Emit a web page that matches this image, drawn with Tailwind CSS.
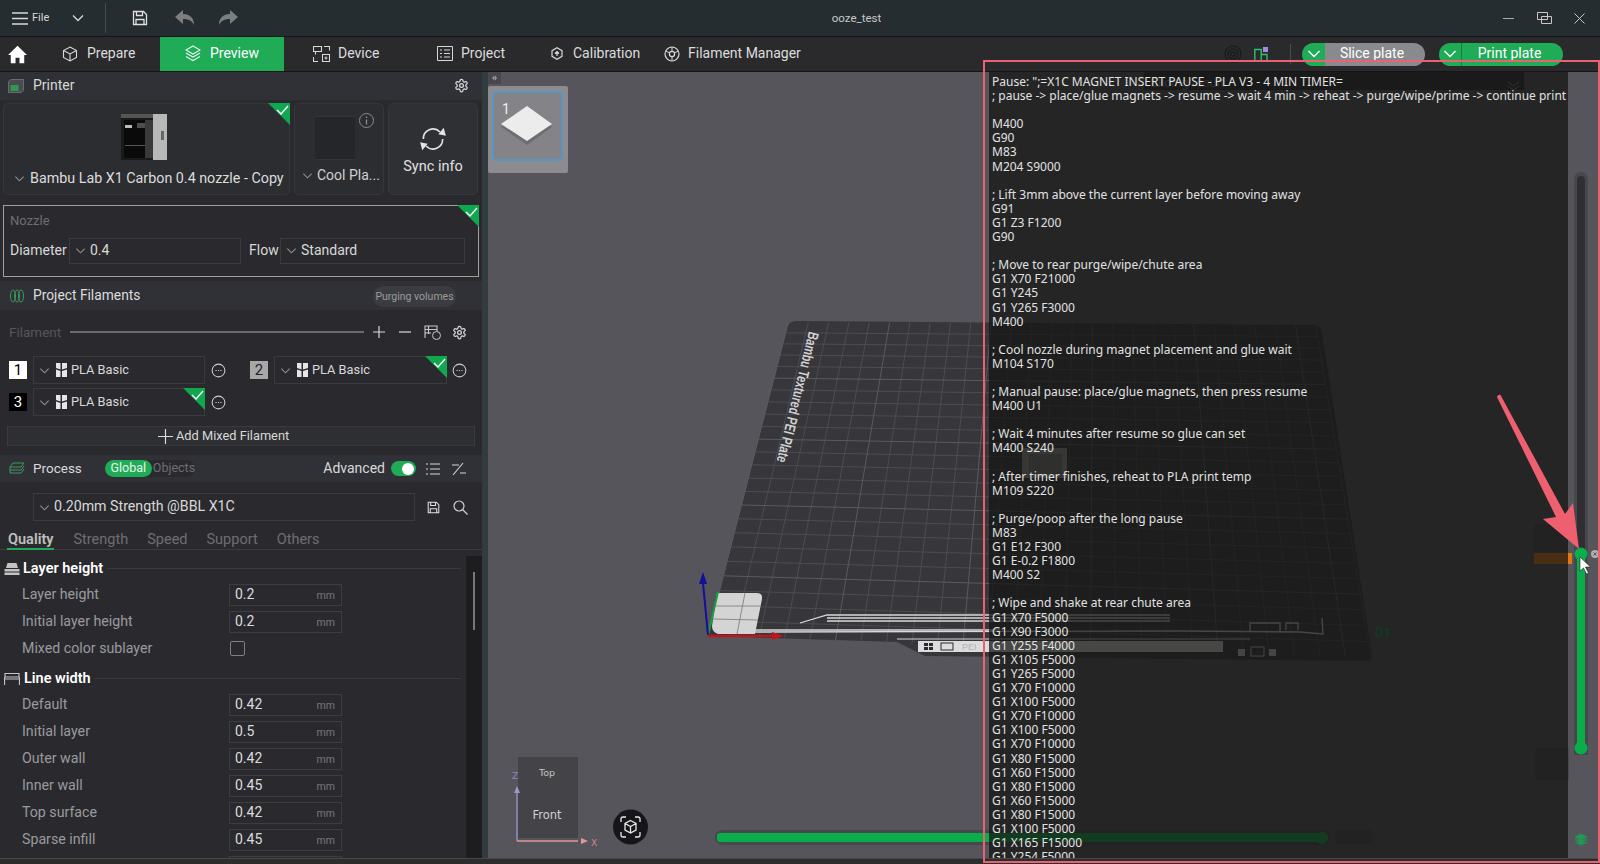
<!DOCTYPE html>
<html lang="en">
<head>
<meta charset="utf-8">
<title>ooze_test</title>
<script src="https://cdn.jsdelivr.net/npm/@tailwindcss/browser@4"></script>
</head>
<body class="w-[1600px] h-[864px] overflow-hidden bg-[#2a2a2e] font-['Roboto',sans-serif] text-[14px] text-[#d8d8d8]">
<svg class="hidden">
  <symbol id="chev" viewBox="0 0 12 12"><path d="M1.5 4L6 8.5 10.5 4" fill="none" stroke="#8f8f8f" stroke-width="1.2"/></symbol>
  <symbol id="corner" viewBox="0 0 22 22"><path d="M0 0H22V22Z" fill="#10a84f"/><path d="M9 7l4 4 7-8" fill="none" stroke="#fff" stroke-width="1.4"/></symbol>
  <symbol id="gear" viewBox="0 0 24 24"><g fill="none" stroke="#d8d8d8" stroke-width="2"><path d="M12.22 2h-.44a2 2 0 0 0-2 2v.18a2 2 0 0 1-1 1.73l-.43.25a2 2 0 0 1-2 0l-.15-.08a2 2 0 0 0-2.73.73l-.22.38a2 2 0 0 0 .73 2.73l.15.1a2 2 0 0 1 1 1.72v.51a2 2 0 0 1-1 1.74l-.15.09a2 2 0 0 0-.73 2.73l.22.38a2 2 0 0 0 2.73.73l.15-.08a2 2 0 0 1 2 0l.43.25a2 2 0 0 1 1 1.73V20a2 2 0 0 0 2 2h.44a2 2 0 0 0 2-2v-.18a2 2 0 0 1 1-1.73l.43-.25a2 2 0 0 1 2 0l.15.08a2 2 0 0 0 2.73-.73l.22-.39a2 2 0 0 0-.73-2.73l-.15-.08a2 2 0 0 1-1-1.74v-.5a2 2 0 0 1 1-1.74l.15-.09a2 2 0 0 0 .73-2.73l-.22-.38a2 2 0 0 0-2.73-.73l-.15.08a2 2 0 0 1-2 0l-.43-.25a2 2 0 0 1-1-1.73V4a2 2 0 0 0-2-2z"/><circle cx="12" cy="12" r="3"/></g></symbol>
  <symbol id="more" viewBox="0 0 16 16"><circle cx="8" cy="8" r="6.8" fill="none" stroke="#cfcfcf" stroke-width="1.100"/><path d="M4.800 8h1.200M7.400 8h1.200M10 8h1.200" stroke="#cfcfcf" stroke-width="1.300"/></symbol>
  <symbol id="bambu" viewBox="0 0 11 14"><path d="M0 0h4.500v6.500L0 5zM6 0h5v5L6 6.500zM0 6.500l4.500 1.500V14H0zM6 8l5-1.500V14H6z" fill="#e6e6e6"/></symbol>
  <symbol id="save" viewBox="0 0 16 16"><path d="M1.500 1.500h10l3 3v10h-13zM4.500 1.500v4h6v-4M4 14.500v-5h8v5" fill="none" stroke="#e0e0e0" stroke-width="1.300"/></symbol>
</svg>

<div class="flex flex-col w-full h-full">
  <!-- title bar -->
  <header class="h-[37px] shrink-0 flex items-center bg-[#262d30] border-b border-[#141516] text-[#d8d8d8]">
    <svg class="ml-[12px] w-[16px] h-[13px]" viewBox="0 0 16 13"><path d="M0 1h16M0 6.500h16M0 12h16" stroke="#d8d8d8" stroke-width="1.300"/></svg>
    <span class="ml-[4px] w-[16px] text-[11px]">File</span>
    <svg class="ml-[24px] w-[12px] h-[12px]" viewBox="0 0 12 12"><path d="M1 3.500L6 8.500 11 3.500" fill="none" stroke="#d8d8d8" stroke-width="1.300"/></svg>
    <div class="ml-[21px] w-px h-[30px] bg-[#454c4e]"></div>
    <svg class="ml-[26px] w-[16px] h-[16px]" viewBox="0 0 16 16"><use href="#save"/></svg>
    <svg class="ml-[27px] w-[20px] h-[16px]" viewBox="0 0 20 16"><path d="M0 7L8 0v4c7 0 11 4 11 11-2-4-5-6-11-6v5z" fill="#7b7f80"/></svg>
    <svg class="ml-[23px] w-[20px] h-[16px]" viewBox="0 0 20 16"><path d="M20 7L12 0v4C5 4 1 8 1 15c2-4 5-6 11-6v5z" fill="#7b7f80"/></svg>
    <div class="flex-1 text-center text-[11.500px] text-[#c8c8c8] pr-[28px] pt-[1px]">ooze_test</div>
    <div class="flex items-center gap-[18px] pr-[15px]">
      <svg class="w-[11px] h-[11px]" viewBox="0 0 11 11"><path d="M0 5.500h11" stroke="#a8a8a8"/></svg>
      <svg class="w-[15px] h-[12px] ml-[5px]" viewBox="0 0 15 12"><path d="M.5.500h10v7H.5zM4.500 4.500h10v7h-10z" fill="none" stroke="#c8c8c8"/></svg>
      <svg class="w-[11px] h-[11px] ml-[4px]" viewBox="0 0 11 11"><path d="M.5.500l10 10M10.500.500l-10 10" stroke="#c8c8c8"/></svg>
    </div>
  </header>

  <!-- tab bar -->
  <nav class="h-[35px] shrink-0 flex items-center bg-[#2a2a2d] border-b border-[#141516] text-[14px] text-[#dcdcdc]">
    <div class="w-[40px] pl-[8px]">
      <svg class="w-[19px] h-[19px]" viewBox="0 0 24 24"><path d="M12 1L0 12.500h3.500V23h6v-7h5v7h6V12.500H24z" fill="#fff"/></svg>
    </div>
    <div class="w-[120px] pl-[22px] pb-[1px] flex items-center gap-[9px]">
      <svg class="w-[16px] h-[16px]" viewBox="0 0 16 16"><path d="M8 1l6.500 3.500v7L8 15l-6.500-3.500v-7zM1.500 4.500L8 8l6.500-3.500M8 8v7" fill="none" stroke="#d8d8d8" stroke-width="1.100"/></svg>Prepare
    </div>
    <div class="w-[124px] h-full pb-[1px] bg-[#20ab57] flex items-center justify-center gap-[9px] text-white">
      <svg class="w-[16px] h-[17px]" viewBox="0 0 16 17"><path d="M8 1l7 4-7 4-7-4zM1 8l7 4 7-4M1 11.500l7 4 7-4" fill="none" stroke="#e8f5ec" stroke-width="1.100"/></svg>Preview
    </div>
    <div class="w-[136px] pl-[29px] pb-[1px] flex items-center gap-[8px]">
      <svg class="w-[17px] h-[16px]" viewBox="0 0 17 16"><path d="M.5.500h8v5h-8zM2.500 5.500v3M11 .5h5.500v4M.5 11v4.500H5M9.500 8.500h7v7h-7zM13 10.500v3M11.500 12h3" fill="none" stroke="#d8d8d8" stroke-width="1.100"/></svg>Device
    </div>
    <div class="w-[114px] pl-[17px] pb-[1px] flex items-center gap-[8px]">
      <svg class="w-[16px] h-[15px]" viewBox="0 0 16 15"><path d="M.5.500h15v14H.5zM3 4h2M7 4h6M3 7.500h2M7 7.500h6M3 11h2M7 11h6" fill="none" stroke="#d8d8d8" stroke-width="1"/></svg>Project
    </div>
    <div class="w-[113px] pl-[17px] pb-[1px] flex items-center gap-[10px]">
      <svg class="w-[12px] h-[13px]" viewBox="0 0 12 13"><path d="M6 .8l5 2.900v5.600l-5 2.900-5-2.900V3.700zM6 9V4.500M4 6.500l2-2 2 2" fill="none" stroke="#d8d8d8" stroke-width="1.200"/></svg>Calibration
    </div>
    <div class="pl-[17px] pb-[1px] flex items-center gap-[8px]">
      <svg class="w-[16px] h-[16px]" viewBox="0 0 16 16"><circle cx="8" cy="8" r="7" fill="none" stroke="#d8d8d8" stroke-width="1.200"/><circle cx="8" cy="8" r="2.600" fill="none" stroke="#d8d8d8" stroke-width="1.200"/><path d="M8 1v4.400M1.800 5l4 2M14.200 5l-4 2M8 10.600V15" stroke="#d8d8d8" stroke-width="1"/></svg>Filament Manager
    </div>
    <div class="ml-auto pr-[37px] flex items-center h-full">
      <svg class="w-[18px] h-[18px] mr-[12px]" viewBox="0 0 18 18"><circle cx="9" cy="9" r="8" fill="none" stroke="#17191a" stroke-width="1.200"/><circle cx="9" cy="9" r="5" fill="none" stroke="#17191a" stroke-width="1.200"/><circle cx="9" cy="9" r="2.200" fill="none" stroke="#17191a" stroke-width="1.200"/></svg>
      <svg class="w-[14px] h-[15px]" viewBox="0 0 14 15"><path d="M.8 2.500h6.400v12H.8zM7.200 7.500h5.800v7H7.200z" fill="none" stroke="#2dc26b" stroke-width="1.400"/><path d="M9 0h5v5H9z" fill="#a58ae0"/></svg>
      <div class="ml-[22px] w-px h-[20px] bg-[#4b4b4e]"></div>
      <div class="ml-[11px] w-[123px] h-[23px] flex rounded-full overflow-hidden text-white">
        <div class="w-[23px] bg-[#20ab57] flex items-center justify-center"><svg class="w-[14px] h-[8px]" viewBox="0 0 13 8"><path d="M1 1l5.500 5.500L12 1" fill="none" stroke="#fff" stroke-width="1.400"/></svg></div>
        <div class="flex-1 bg-[#8a8a8e] flex items-center justify-center pr-[6px] pb-[1px]">Slice plate</div>
      </div>
      <div class="ml-[14px] w-[124px] h-[23px] flex rounded-full overflow-hidden text-white">
        <div class="w-[23px] bg-[#20ab57] flex items-center justify-center border-r border-[#1a7a40]"><svg class="w-[14px] h-[8px]" viewBox="0 0 13 8"><path d="M1 1l5.500 5.500L12 1" fill="none" stroke="#fff" stroke-width="1.400"/></svg></div>
        <div class="flex-1 bg-[#20ab57] flex items-center justify-center pr-[6px] pb-[1px]">Print plate</div>
      </div>
    </div>
  </nav>

  <div class="flex-1 min-h-0 flex">
    <!-- sidebar -->
    <aside class="w-[482px] shrink-0 flex flex-col bg-[#2a2a2e] overflow-hidden">
      <div class="h-[28px] shrink-0 bg-[#303136] flex items-center pl-[8px] pr-[13px] pb-[1px]">
        <svg class="w-[16px] h-[14px]" viewBox="0 0 16 14"><path d="M.5 2.500L3 .5h12.500v11l-2.500 2H.5z" fill="#4a4b50" stroke="#777" stroke-width=".8"/><path d="M2.500 6h8v6h-8z" fill="#2a9a55"/></svg>
        <span class="ml-[9px]">Printer</span>
        <svg class="ml-auto w-[15px] h-[15px]" viewBox="0 0 24 24"><use href="#gear"/></svg>
      </div>

      <div class="mt-[3px] h-[92px] shrink-0 flex gap-[4px] px-[3px]">
        <div class="relative w-[287px] bg-[#2c2d31] border border-[#36373b] rounded-[5px] flex flex-col items-center">
          <svg class="absolute -top-px -right-px w-[22px] h-[22px]" viewBox="0 0 22 22"><use href="#corner"/></svg>
          <svg class="mt-[10px] -ml-[5px] w-[46px] h-[46px]" viewBox="0 0 46 46"><rect width="46" height="46" fill="#1a1a1a"/><rect x="0" y="0" width="34" height="4" fill="#555"/><rect x="32" width="14" height="46" fill="#b8b8b8"/><rect x="3" y="6" width="27" height="38" fill="#0a0a0a"/><rect x="4" y="11" width="7" height="3" fill="#bbb"/><rect x="16" y="9" width="12" height="5" fill="#4d4d4d"/><rect x="4" y="31" width="24" height="1" fill="#555"/><rect x="24" y="6" width="8" height="38" fill="#3a3a3a"/><rect x="40" y="17" width="3" height="9" fill="#666"/></svg>
          <div class="mt-[8px] w-full flex items-center pl-[10px] text-[14.300px] text-[#dcdcdc] whitespace-nowrap">
            <svg class="w-[11px] h-[11px] mr-[5px]" viewBox="0 0 12 12"><use href="#chev"/></svg>Bambu Lab X1 Carbon 0.4 nozzle - Copy
          </div>
        </div>
        <div class="relative w-[90px] bg-[#2c2d31] border border-[#36373b] rounded-[5px] flex flex-col">
          <svg class="absolute top-[9px] right-[9px] w-[15px] h-[15px]" viewBox="0 0 15 15"><circle cx="7.500" cy="7.500" r="7" fill="none" stroke="#8c8c8c"/><path d="M7.500 6.500v5M7.500 3.500v1.500" stroke="#8c8c8c" stroke-width="1.300"/></svg>
          <div class="mt-[12px] ml-[20px] w-[40px] h-[44px] bg-[#25262a] border-t border-b border-[#33343a]"></div>
          <div class="mt-[5px] flex items-center pl-[7px] text-[#d0d0d0] whitespace-nowrap">
            <svg class="w-[11px] h-[11px] mr-[4px]" viewBox="0 0 12 12"><use href="#chev"/></svg>Cool Pla...
          </div>
        </div>
        <div class="w-[90px] bg-[#2f3034] border border-[#36373b] rounded-[5px] flex flex-col items-center">
          <svg class="mt-[22px] w-[30px] h-[26px]" viewBox="0 0 28 24"><path d="M5 12a9 9 0 0 1 15.500-6.500M23 12a9 9 0 0 1-15.500 6.500" fill="none" stroke="#e4e4e4" stroke-width="1.500"/><path d="M24 1.500l2 7.500-7-1.500zM4 22.500l-2-7.500 7 1.500z" fill="#e4e4e4"/></svg>
          <span class="mt-[4px] text-[#e0e0e0] text-[14.500px]">Sync info</span>
        </div>
      </div>

      <div class="relative mt-[10px] mx-[3px] h-[72px] shrink-0 border border-[#a0a0a0] px-[6px]">
        <svg class="absolute -top-px -right-px w-[22px] h-[22px]" viewBox="0 0 22 22"><use href="#corner"/></svg>
        <div class="mt-[5px] text-[13px] text-[#6e6e72]">Nozzle</div>
        <div class="mt-[7px] flex items-center">
          <span class="w-[59px]">Diameter</span>
          <div class="w-[172px] h-[26px] border border-[#3a3b3f] flex items-center pl-[5px]"><svg class="w-[11px] h-[11px] mr-[4px]" viewBox="0 0 12 12"><use href="#chev"/></svg>0.4</div>
          <span class="ml-[8px] w-[31px]">Flow</span>
          <div class="w-[185px] h-[26px] border border-[#3a3b3f] flex items-center pl-[5px]"><svg class="w-[11px] h-[11px] mr-[4px]" viewBox="0 0 12 12"><use href="#chev"/></svg>Standard</div>
        </div>
      </div>

      <div class="mt-[4px] h-[29px] shrink-0 bg-[#303136] flex items-center pl-[10px]">
        <svg class="w-[14px] h-[14px]" viewBox="0 0 14 14"><g fill="none" stroke="#3f9a63" stroke-width="1"><ellipse cx="3" cy="7" rx="2.500" ry="6"/><ellipse cx="7" cy="7" rx="2.500" ry="6"/><ellipse cx="11" cy="7" rx="2.500" ry="6"/></g></svg>
        <span class="ml-[9px] text-[#dcdcdc] text-[13.800px]">Project Filaments</span>
        <span class="ml-auto mr-[26px] mt-[2px] w-[83px] h-[21px] rounded-full bg-[#3b3c41] text-[10.500px] text-[#9a9a9a] flex items-center justify-center">Purging volumes</span>
      </div>

      <div class="h-[44px] shrink-0 flex items-center pl-[9px]">
        <span class="w-[61px] text-[13.500px] text-[#55565a]">Filament</span>
        <div class="w-[294px] h-[2px] bg-[#6a6a6e]"></div>
        <svg class="ml-[9px] w-[12px] h-[12px]" viewBox="0 0 12 12"><path d="M6 0v12M0 6h12" stroke="#d8d8d8" stroke-width="1.200"/></svg>
        <svg class="ml-[14px] w-[12px] h-[12px]" viewBox="0 0 12 12"><path d="M0 6h12" stroke="#d8d8d8" stroke-width="1.200"/></svg>
        <svg class="ml-[13px] w-[17px] h-[15px]" viewBox="0 0 17 15"><path d="M1 13V1h12v6M1 4.500h12M4.500 1v8M1 8h6" fill="none" stroke="#c8c8c8" stroke-width="1.100"/><circle cx="12.500" cy="10.500" r="4" fill="#2a2a2e" stroke="#c8c8c8"/></svg>
        <svg class="ml-[11px] w-[15px] h-[15px]" viewBox="0 0 24 24"><use href="#gear"/></svg>
      </div>

      <div class="mt-[2px] h-[28px] shrink-0 flex items-center text-[12.800px]">
        <div class="ml-[9px] w-[18px] h-[18px] bg-white text-black text-[15px] flex items-center justify-center">1</div>
        <div class="ml-[6px] w-[172px] h-full border border-[#3a3b3f] flex items-center pl-[5px]"><svg class="w-[11px] h-[11px] mr-[6px]" viewBox="0 0 12 12"><use href="#chev"/></svg><svg class="w-[11px] h-[14px] mr-[4px]" viewBox="0 0 11 14"><use href="#bambu"/></svg>PLA Basic</div>
        <svg class="ml-[6px] w-[15px] h-[15px]" viewBox="0 0 16 16"><use href="#more"/></svg>
        <div class="ml-[24px] w-[18px] h-[18px] bg-[#a8a8a8] text-[#222] text-[15px] flex items-center justify-center">2</div>
        <div class="relative ml-[6px] w-[173px] h-full border border-[#3a3b3f] flex items-center pl-[5px]"><svg class="absolute -top-px -right-px w-[22px] h-[22px]" viewBox="0 0 22 22"><use href="#corner"/></svg><svg class="w-[11px] h-[11px] mr-[6px]" viewBox="0 0 12 12"><use href="#chev"/></svg><svg class="w-[11px] h-[14px] mr-[4px]" viewBox="0 0 11 14"><use href="#bambu"/></svg>PLA Basic</div>
        <svg class="ml-[5px] w-[15px] h-[15px]" viewBox="0 0 16 16"><use href="#more"/></svg>
      </div>
      <div class="mt-[4px] h-[28px] shrink-0 flex items-center text-[12.800px]">
        <div class="ml-[9px] w-[18px] h-[18px] bg-black text-white text-[15px] flex items-center justify-center">3</div>
        <div class="relative ml-[6px] w-[172px] h-full border border-[#3a3b3f] flex items-center pl-[5px]"><svg class="absolute -top-px -right-px w-[22px] h-[22px]" viewBox="0 0 22 22"><use href="#corner"/></svg><svg class="w-[11px] h-[11px] mr-[6px]" viewBox="0 0 12 12"><use href="#chev"/></svg><svg class="w-[11px] h-[14px] mr-[4px]" viewBox="0 0 11 14"><use href="#bambu"/></svg>PLA Basic</div>
        <svg class="ml-[6px] w-[15px] h-[15px]" viewBox="0 0 16 16"><use href="#more"/></svg>
      </div>

      <div class="mt-[10px] mx-[7px] h-[20px] shrink-0 border border-[#3a3b3f] bg-[#2e2f33] flex items-center pl-[150px] text-[12.800px] gap-[3px]">
        <svg class="w-[15px] h-[15px]" viewBox="0 0 15 15"><path d="M7.500 0v15M0 7.500h15" stroke="#dcdcdc" stroke-width="1.200"/></svg>Add Mixed Filament
      </div>

      <div class="mt-[9px] h-[27px] shrink-0 bg-[#303136] flex items-center pl-[9px]">
        <svg class="w-[16px] h-[14px]" viewBox="0 0 16 14"><path d="M4 1h11l-3 4H1zM1 5v3h11l3-4M1 8v3h11l3-4" fill="none" stroke="#3f9a63" stroke-width="1"/></svg>
        <span class="ml-[8px] text-[13.500px]">Process</span>
        <div class="ml-[23px] h-[17px] flex items-center rounded-full bg-[#2a2a2e] text-[12.500px]">
          <span class="w-[47px] h-full rounded-full bg-[#20ab57] text-[#e8f5ec] flex items-center justify-center">Global</span>
          <span class="w-[43px] text-[#6e6e72] pl-[1px]">Objects</span>
        </div>
        <span class="ml-auto">Advanced</span>
        <div class="ml-[6px] w-[25px] h-[15px] rounded-full bg-[#20ab57] flex items-center justify-end pr-[2px]"><div class="w-[12px] h-[12px] rounded-full bg-white"></div></div>
        <svg class="ml-[10px] w-[14px] h-[12px]" viewBox="0 0 14 12"><path d="M0 1h2M4 1h10M0 6h2M4 6h10M0 11h2M4 11h10" stroke="#d8d8d8" stroke-width="1.100"/></svg>
        <svg class="ml-[12px] mr-[16px] w-[14px] h-[14px]" viewBox="0 0 14 14"><path d="M1 13L11 1M0 3h7M8 11h6" stroke="#d8d8d8" stroke-width="1.100"/></svg>
      </div>

      <div class="mt-[11px] h-[28px] shrink-0 flex items-center">
        <div class="ml-[33px] w-[382px] h-full border border-[#3a3b3f] flex items-center pl-[5px] text-[14.200px]"><svg class="w-[11px] h-[11px] mr-[4px]" viewBox="0 0 12 12"><use href="#chev"/></svg>0.20mm Strength @BBL X1C</div>
        <svg class="ml-[12px] w-[13px] h-[13px]" viewBox="0 0 16 16"><use href="#save"/></svg>
        <svg class="ml-[13px] w-[15px] h-[15px]" viewBox="0 0 15 15"><circle cx="6" cy="6" r="5" fill="none" stroke="#d0d0d0" stroke-width="1.200"/><path d="M9.500 9.500L14.500 14.500" stroke="#d0d0d0" stroke-width="1.200"/></svg>
      </div>

      <div class="h-[29px] shrink-0 flex items-end border-b border-[#3a3b3f] text-[14.500px] text-[#6e6e72] pl-[7px] gap-[19px]">
        <span class="h-[19px] border-b-2 border-[#20ab57] font-semibold text-[#c0c0c0] px-px leading-[17px] -mb-px">Quality</span>
        <span class="h-[20px]">Strength</span>
        <span class="h-[20px]">Speed</span>
        <span class="h-[20px]">Support</span>
        <span class="h-[20px]">Others</span>
      </div>

      <div class="flex-1 min-h-0 flex">
        <div class="flex-1 min-w-0 overflow-hidden">
          <div class="mt-[6px] h-[25px] flex items-center pl-[4px] pr-[5px]">
            <svg class="w-[16px] h-[14px]" viewBox="0 0 16 14"><path d="M2 6l1.500-5h9L14 6zM.5 7h15v2.500H.5zM.5 10.500h15V13H.5z" fill="#c4c4c4"/></svg>
            <span class="ml-[3px] font-semibold text-[14.500px] text-white">Layer height</span>
            <div class="ml-[4px] flex-1 h-px bg-[#3a3b3f]"></div>
          </div>
          <div class="h-[27px] flex items-center text-[14.200px] text-[#9a9a9e]"><span class="pl-[22px] w-[229px]">Layer height</span><div class="w-[113px] h-[22px] border border-[#3c3d41] flex items-center pl-[5px] pr-[6px] text-[14px] text-[#dcdcdc]">0.2<span class="ml-auto mt-[3px] text-[10.500px] text-[#77777b]">mm</span></div></div>
          <div class="h-[27px] flex items-center text-[14.200px] text-[#9a9a9e]"><span class="pl-[22px] w-[229px]">Initial layer height</span><div class="w-[113px] h-[22px] border border-[#3c3d41] flex items-center pl-[5px] pr-[6px] text-[14px] text-[#dcdcdc]">0.2<span class="ml-auto mt-[3px] text-[10.500px] text-[#77777b]">mm</span></div></div>
          <div class="h-[27px] flex items-center text-[14.200px] text-[#9a9a9e]"><span class="pl-[22px] w-[230px]">Mixed color sublayer</span><div class="w-[15px] h-[15px] border border-[#808084] rounded-[2px]"></div></div>
          <div class="mt-[4px] h-[25px] flex items-center pl-[4px] pr-[5px]">
            <svg class="w-[16px] h-[12px]" viewBox="0 0 16 12"><path d="M1 .5h14v3.500H1zM1 6h14M.5 4v8M15.500 4v8" fill="none" stroke="#c4c4c4" stroke-width="1.200"/></svg>
            <span class="ml-[4px] font-semibold text-[14.500px] text-white">Line width</span>
            <div class="ml-[4px] flex-1 h-px bg-[#3a3b3f]"></div>
          </div>
          <div class="h-[27px] flex items-center text-[14.200px] text-[#9a9a9e]"><span class="pl-[22px] w-[229px]">Default</span><div class="w-[113px] h-[22px] border border-[#3c3d41] flex items-center pl-[5px] pr-[6px] text-[14px] text-[#dcdcdc]">0.42<span class="ml-auto mt-[3px] text-[10.500px] text-[#77777b]">mm</span></div></div>
          <div class="h-[27px] flex items-center text-[14.200px] text-[#9a9a9e]"><span class="pl-[22px] w-[229px]">Initial layer</span><div class="w-[113px] h-[22px] border border-[#3c3d41] flex items-center pl-[5px] pr-[6px] text-[14px] text-[#dcdcdc]">0.5<span class="ml-auto mt-[3px] text-[10.500px] text-[#77777b]">mm</span></div></div>
          <div class="h-[27px] flex items-center text-[14.200px] text-[#9a9a9e]"><span class="pl-[22px] w-[229px]">Outer wall</span><div class="w-[113px] h-[22px] border border-[#3c3d41] flex items-center pl-[5px] pr-[6px] text-[14px] text-[#dcdcdc]">0.42<span class="ml-auto mt-[3px] text-[10.500px] text-[#77777b]">mm</span></div></div>
          <div class="h-[27px] flex items-center text-[14.200px] text-[#9a9a9e]"><span class="pl-[22px] w-[229px]">Inner wall</span><div class="w-[113px] h-[22px] border border-[#3c3d41] flex items-center pl-[5px] pr-[6px] text-[14px] text-[#dcdcdc]">0.45<span class="ml-auto mt-[3px] text-[10.500px] text-[#77777b]">mm</span></div></div>
          <div class="h-[27px] flex items-center text-[14.200px] text-[#9a9a9e]"><span class="pl-[22px] w-[229px]">Top surface</span><div class="w-[113px] h-[22px] border border-[#3c3d41] flex items-center pl-[5px] pr-[6px] text-[14px] text-[#dcdcdc]">0.42<span class="ml-auto mt-[3px] text-[10.500px] text-[#77777b]">mm</span></div></div>
          <div class="h-[27px] flex items-center text-[14.200px] text-[#9a9a9e]"><span class="pl-[22px] w-[229px]">Sparse infill</span><div class="w-[113px] h-[22px] border border-[#3c3d41] flex items-center pl-[5px] pr-[6px] text-[14px] text-[#dcdcdc]">0.45<span class="ml-auto mt-[3px] text-[10.500px] text-[#77777b]">mm</span></div></div>
          <div class="h-[27px] flex items-center"><span class="w-[229px]"></span><div class="w-[113px] h-[22px] border border-[#3c3d41]"></div></div>
        </div>
        <div class="w-[16px] shrink-0 mt-[6px] bg-[#1d1d1f] pt-[16px] flex justify-center"><div class="w-[2px] h-[58px] bg-[#77777b]"></div></div>
      </div>
    </aside>

    <div class="w-[6px] shrink-0 bg-[#323c3e]"></div>

    <!-- 3D canvas -->
    <main class="relative flex-1 min-w-0 bg-[#55555b] overflow-hidden">
      <svg class="absolute inset-0 w-full h-full" viewBox="488 72 1112 786">
        <rect x="488" y="72" width="13" height="12" fill="#47474d"/>
        <path d="M492 78l2.500-2.500v5zM497 78l-2-2.500v5z" fill="#9a9aa0"/>
        <!-- plate thumbnail -->
        <rect x="488" y="86" width="80" height="87" rx="2" fill="#8b8b90"/>
        <rect x="493" y="92" width="69" height="68" rx="3" fill="#848488" stroke="#4a9bd8" stroke-width="1.500"/>
        <text x="502" y="114" font-size="14" fill="#eee" font-family="Roboto">1</text>
        <path d="M501 125L527 108 552 125 527 143Z" fill="#6e6e72" transform="translate(0,2)"/>
        <path d="M501 124L527 106 552 124 527 141Z" fill="#ececec"/>
        <!-- bed -->
        <path d="M788 326Q790 321 797 321L1315 325Q1320 326 1322 332L1372 655Q1372 661 1365 661L925 656 897 642 708 636Z" fill="#36363b"/>
        <path id="grid" d="" fill="none" stroke="#4c4c52" stroke-width="1"/>
        <path id="grid2" d="" fill="none" stroke="#5a5a60" stroke-width="1"/>
        <text transform="translate(809,331) rotate(104)" font-size="15" font-weight="700" fill="#cfcfcf" font-family="Liberation Sans" textLength="134" lengthAdjust="spacingAndGlyphs">Bambu Textured PEI Plate</text>
        <!-- strip printed on the bed -->
        <g fill="none" stroke="#d8d8d8" stroke-width="1.300">
          <path d="M800 623L827 615H1170M827 618H1170M827 621H1170M755 630H1000"/>
          <path d="M755 632L1180 631 1300 632 1323 634 1322 618"/>
          <path d="M1250 631V623H1280V631M1286 630V623H1298V630"/>
        </g>
        <path d="M897 639H1250" stroke="#d8d8d8"/>
        <rect x="918" y="641" width="305" height="11" fill="#dcdcdc"/>
        <g fill="#2a2a2e"><rect x="924" y="643" width="4" height="3"/><rect x="929" y="643" width="4" height="3"/><rect x="924" y="647" width="4" height="3"/><rect x="929" y="647" width="4" height="3"/><rect x="941" y="643" width="12" height="7" fill="none" stroke="#2a2a2e"/></g>
        <text x="962" y="650" font-size="9" fill="#b0b0b0" font-family="Liberation Sans">PEI</text>
        <g fill="#cfcfcf"><rect x="1238" y="649" width="7" height="7"/><rect x="1251" y="647" width="13" height="9" fill="none" stroke="#cfcfcf"/><rect x="1269" y="649" width="7" height="7"/></g>
        <!-- first-layer plate -->
        <path d="M717 593H757Q763 593 762 599L755 634H718Q712 632 712 626Z" fill="#d4d4d4"/>
        <path d="M715 606L761 606M713 619L758 620M745 593L737 634" stroke="#777" stroke-width=".8"/>
        <path d="M708 635L718 592" stroke="#14a03c" stroke-width="2"/>
        <path d="M708 635L703 583" stroke="#10109a" stroke-width="2"/>
        <path d="M703 572L699 584 707 584Z" fill="#10109a"/>
        <path d="M708 636H772" stroke="#c0141e" stroke-width="2.500"/>
        <path d="M784 636L772 632V640Z" fill="#c0141e"/>
        <!-- view cube -->
        <rect x="518" y="757" width="60" height="81" fill="#444448"/>
        <text x="547" y="776" text-anchor="middle" font-size="9.500" fill="#c4c4c4" font-family="DejaVu Sans">Top</text>
        <text x="547" y="819" text-anchor="middle" font-size="11.500" fill="#d0d0d0" font-family="DejaVu Sans">Front</text>
        <text x="512" y="779" font-size="9" fill="#8a86c8" font-family="DejaVu Sans">Z</text>
        <path d="M517 841V790" stroke="#9a96d0" stroke-width="1.300"/><path d="M517 786l-3 7h6z" fill="#9a96d0"/>
        <path d="M517 841H578" stroke="#e09a9e" stroke-width="1.300"/><path d="M588 841l-7-3v6z" fill="#e09a9e"/>
        <text x="591" y="846" font-size="9" fill="#d88488" font-family="DejaVu Sans">X</text>
        <circle cx="630.500" cy="827" r="17.500" fill="#16161a"/>
        <g fill="none" stroke="#e8e8e8" stroke-width="1.300"><path d="M621 822v-3a2 2 0 0 1 2-2h3M635 817h3a2 2 0 0 1 2 2v3M640 832v3a2 2 0 0 1-2 2h-3M626 837h-3a2 2 0 0 1-2-2v-3"/><path d="M630.500 820.500l5.500 3v6.500l-5.500 3-5.500-3v-6.500zM625 823.500l5.500 3 5.500-3M630.500 826.500v6.500"/></g>
        <!-- layer slider (runs under the panel) -->
        <rect x="715" y="830" width="615" height="15" rx="7.500" fill="#47474c"/>
        <rect x="717" y="833" width="605" height="9" rx="3" fill="#09ae4a"/>
        <circle cx="1322" cy="838" r="6" fill="#09ae4a"/>
        <rect x="1336" y="830" width="36" height="14" fill="#48484c"/>
        <text x="1375" y="638" font-size="14" font-weight="700" fill="#0aa048" font-family="Roboto">01</text>
        <rect x="1022" y="448" width="45" height="30" fill="#9a9a9a"/><rect x="1029" y="454" width="33" height="20" fill="#7c7c7c"/>
        <!-- things under the panel header -->
        <rect x="1144" y="72" width="380" height="18" fill="#2a2a2c"/>
        <text x="1150" y="87" font-size="13" fill="#7a7a7e" font-family="Roboto">Slicing result</text>
        <path d="M1508 82l5.500 4 5.500-4M1508 86l5.500 4 5.500-4" fill="none" stroke="#8a8a8e"/>
        <!-- vertical slider ghost labels -->
        <rect x="1534" y="524" width="34" height="28" fill="#48484c"/>
        <rect x="1534" y="553" width="38" height="11" fill="#e07a10"/>
        <rect x="1535" y="748" width="34" height="32" fill="#4a4a4e"/>
      </svg>

      <!-- G-code panel -->
      <div class="absolute left-[501px] top-0 bottom-0 w-[579px] bg-[#151514]/75 overflow-hidden pt-[3px] pl-[3px]">
<pre class="font-['Noto_Sans',sans-serif] text-[12px] leading-[14.1px] text-[#e2e2e2]">Pause: ";=X1C MAGNET INSERT PAUSE - PLA V3 - 4 MIN TIMER=
; pause -&gt; place/glue magnets -&gt; resume -&gt; wait 4 min -&gt; reheat -&gt; purge/wipe/prime -&gt; continue print

M400
G90
M83
M204 S9000

; Lift 3mm above the current layer before moving away
G91
G1 Z3 F1200
G90

; Move to rear purge/wipe/chute area
G1 X70 F21000
G1 Y245
G1 Y265 F3000
M400

; Cool nozzle during magnet placement and glue wait
M104 S170

; Manual pause: place/glue magnets, then press resume
M400 U1

; Wait 4 minutes after resume so glue can set
M400 S240

; After timer finishes, reheat to PLA print temp
M109 S220

; Purge/poop after the long pause
M83
G1 E12 F300
G1 E-0.2 F1800
M400 S2

; Wipe and shake at rear chute area
G1 X70 F5000
G1 X90 F3000
G1 Y255 F4000
G1 X105 F5000
G1 Y265 F5000
G1 X70 F10000
G1 X100 F5000
G1 X70 F10000
G1 X100 F5000
G1 X70 F10000
G1 X80 F15000
G1 X60 F15000
G1 X80 F15000
G1 X60 F15000
G1 X80 F15000
G1 X100 F5000
G1 X165 F15000
G1 Y254 F5000</pre>
      </div>

      <!-- vertical layer slider, over the panel -->
      <svg class="absolute inset-0 w-full h-full pointer-events-none" viewBox="488 72 1112 786">
        <rect x="1574" y="172" width="14" height="390" rx="7" fill="#47474c"/>
        <rect x="1577" y="176" width="8" height="380" rx="4" fill="#2e2e33"/>
        <rect x="1574" y="550" width="14" height="205" fill="#47474c"/>
        <rect x="1577" y="555" width="8" height="193" fill="#09ae4a"/>
        <circle cx="1581" cy="554" r="6.500" fill="#09ae4a"/>
        <circle cx="1581" cy="748" r="6.500" fill="#09ae4a"/>
        <circle cx="1595" cy="554" r="4" fill="#b0b0b0"/><path d="M1593.500 552.500l3 3M1596.500 552.500l-3 3" stroke="#55555b"/>
        <path d="M1581 834l6 3-6 3-6-3zM1575 839.500l6 3 6-3M1575 842l6 3 6-3" fill="#1f9a55" stroke="#1f9a55" stroke-width=".8"/>
      </svg>
    </main>
  </div>

  <div class="h-[6px] shrink-0 bg-[#2d2d2d] border-t border-[#47474a]"></div>
</div>

<!-- annotation layer drawn over the screenshot -->
<div class="fixed left-[983px] top-[60px] w-[617px] h-[803px] border-2 border-[#e8626f] pointer-events-none"></div>
<svg class="fixed inset-0 w-[1600px] h-[864px] pointer-events-none" viewBox="0 0 1600 864">
  <path d="M1497 397Q1498 394 1500.500 395L1565 514 1573 503 1579 549 1543 519 1556 517Z" fill="#ee6070"/>
  <path d="M1580 557v14l3.500-3 3 6 2-1-3-6h5z" fill="#fff" stroke="#222" stroke-width=".6"/>
</svg>

<script>
  var d1 = '', d2 = '', xi, t, j, y;
  for (xi = 0; xi <= 26; xi++) {
    var s = 'M' + (788 + 20.300 * xi) + ' ' + (322 + 0.15 * xi) + 'L' + (708 + 25.5 * xi) + ' ' + (636 + 0.85 * xi);
    if (xi % 5 === 0) d2 += s; else d1 += s;
  }
  for (j = 1; j < 24; j++) {
    t = (j / 24) * 0.82 + (j / 24) * (j / 24) * 0.18;
    var lx = 788 - 80 * t, rx = 1315 + 57 * t;
    var ly = 322 + 314 * t, ry = 325 + 333 * t;
    var s2 = 'M' + lx + ' ' + ly + 'L' + rx + ' ' + ry;
    if (j % 5 === 0) d2 += s2; else d1 += s2;
  }
  document.getElementById('grid').setAttribute('d', d1);
  document.getElementById('grid2').setAttribute('d', d2);
</script>
</body>
</html>
